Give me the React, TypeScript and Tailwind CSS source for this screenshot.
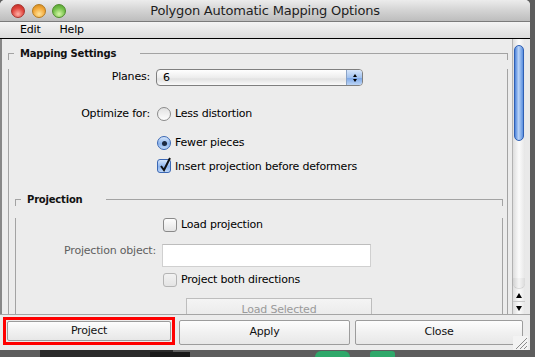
import clsx from 'clsx';

function Light({ color }: { color: 'red' | 'orange' | 'green' }) {
  return (
    <span
      className={clsx(
        'h-[14px] w-[14px] shrink-0 rounded-full border',
        color === 'red' &&
          'border-[#a8322d] bg-[radial-gradient(circle_at_50%_75%,#ffb0a6,#e0453d_55%,#b82a24)]',
        color === 'orange' &&
          'border-[#b47a1e] bg-[radial-gradient(circle_at_50%_75%,#ffe39a,#f3a93a_55%,#c98318)]',
        color === 'green' &&
          'border-[#4e8c2c] bg-[radial-gradient(circle_at_50%_75%,#d6f7a6,#76c24c_55%,#4f9a2c)]'
      )}
    />
  );
}

function Radio({ checked }: { checked?: boolean }) {
  return (
    <span
      className={clsx(
        'flex h-[14px] w-[14px] shrink-0 items-center justify-center rounded-full border',
        checked
          ? 'border-[#3a67b4] bg-[linear-gradient(#d6e6fa,#8db5ee_55%,#bdd6f7)]'
          : 'border-[#8a8a8a] bg-[linear-gradient(#e2e2e2,#fdfdfd)]'
      )}
    >
      {checked && <span className="h-[5px] w-[5px] rounded-full bg-[#1c2a42]" />}
    </span>
  );
}

function Check({ checked, disabled }: { checked?: boolean; disabled?: boolean }) {
  return (
    <span
      className={clsx(
        'relative h-[14px] w-[14px] shrink-0 rounded-[3px] border',
        checked
          ? 'border-[#3a67b4] bg-[linear-gradient(#d6e6fa,#8db5ee_55%,#bdd6f7)]'
          : disabled
            ? 'border-[#b4b4b4] bg-[linear-gradient(#f2f2f2,#e4e4e4)]'
            : 'border-[#8a8a8a] bg-[linear-gradient(#fdfdfd,#e4e4e4)]'
      )}
    >
      {checked && (
        <svg
          className="absolute -top-[3px] left-[1px]"
          width="14"
          height="16"
          viewBox="0 0 14 16"
        >
          <path d="M2 9 L5 13 L11 1" fill="none" stroke="#111" strokeWidth="2" />
        </svg>
      )}
    </span>
  );
}

function GroupHeader({ title }: { title: string }) {
  return (
    <div className="flex h-[14px] items-center">
      <div className="h-[7px] w-[6px] self-end border-l border-t border-[#a3a3a3]" />
      <span className="pl-[6px] pr-[24px] text-[10px] font-bold tracking-[-0.2px] text-[#111]">
        {title}
      </span>
      <div className="h-[7px] flex-1 self-end border-r border-t border-[#a3a3a3]" />
    </div>
  );
}

function Scrollbar() {
  return (
    <div className="flex w-[13px] flex-col border-l border-[#b2b2b2] bg-[linear-gradient(90deg,#dedede,#fbfbfb_50%,#e6e6e6)]">
      <div className="flex flex-1 flex-col">
        <div className="mx-[1px] mt-[6px] h-[96px] rounded-full border border-[#2f5fb3] bg-[linear-gradient(90deg,#4d84db,#b9d3f7_45%,#9fc0f0_60%,#5b90df)]" />
        <div className="flex-1" />
        <div className="mb-[2px] h-[10px] rounded-b-full bg-[linear-gradient(90deg,#d2d2d2,#f5f5f5_50%,#dadada)] shadow-[0_1px_1px_rgba(0,0,0,0.15)]" />
      </div>
      <div className="flex h-[12px] items-center justify-center border-b border-[#c9c9c9]">
        <span className="h-0 w-0 border-x-[3px] border-b-[5px] border-x-transparent border-b-black" />
      </div>
      <div className="flex h-[12px] items-center justify-center">
        <span className="h-0 w-0 border-x-[3px] border-t-[5px] border-x-transparent border-t-black" />
      </div>
    </div>
  );
}

function Button({ label, className }: { label: string; className?: string }) {
  return (
    <div
      className={clsx(
        'flex items-center justify-center rounded-[2px] border border-[#9c9c9c] bg-[linear-gradient(#fdfdfd,#f1f1f1_50%,#e7e7e7)] text-[#111]',
        className
      )}
    >
      {label}
    </div>
  );
}

export default function App() {
  return (
    <div className="relative h-[357px] w-[535px] overflow-hidden bg-[#5d5d5d] font-['DejaVu_Sans',sans-serif] text-[11px] tracking-[-0.2px] text-black">
      <div className="flex h-[350px] w-[530px] flex-col overflow-hidden rounded-t-[5px] bg-[#ececec]">
        {/* title bar */}
        <div className="relative flex h-[22px] items-center border-b border-[#7b7b7b] bg-[linear-gradient(#ececec,#d3d3d3_50%,#bdbdbd)]">
          <div className="ml-[11px] flex gap-[6.5px]">
            <Light color="red" />
            <Light color="orange" />
            <Light color="green" />
          </div>
          <div className="absolute inset-0 flex items-center justify-center text-[13px] text-[#1e1e1e]">
            Polygon Automatic Mapping Options
          </div>
        </div>

        {/* menu bar */}
        <div className="flex h-[17px] items-center gap-[19px] border-b border-black bg-[linear-gradient(#f4f4f4,#dcdcdc)] pl-[20px]">
          <span>Edit</span>
          <span>Help</span>
        </div>

        {/* scroll area */}
        <div className="flex h-[276px] border-b border-[#a5a5a5]">
          <div className="w-[512px] overflow-hidden border-l-2 border-[#878787] pt-[7px]">
            <div className="ml-[6px] w-[500px]">
              <GroupHeader title="Mapping Settings" />
              <div className="border-x border-[#a3a3a3] pb-[40px]">
                <div className="mt-[9px] flex h-[17px] items-center">
                  <span className="w-[141px] text-right">Planes:</span>
                  <div className="ml-[6px] flex h-[17px] w-[207px] overflow-hidden rounded-[4px] border border-[#7f7f7f] bg-[linear-gradient(#ffffff,#ededed_50%,#e2e2e2_60%,#fafafa)]">
                    <span className="flex-1 pl-[6px] leading-[15px]">6</span>
                    <span className="flex w-[16px] flex-col items-center justify-center gap-[2px] border-l border-[#8aa3c6] bg-[linear-gradient(#d7e6fa,#a3c3ef_50%,#7ea9e8_55%,#bcd5f6)]">
                      <span className="h-0 w-0 border-x-[2.5px] border-b-[3px] border-x-transparent border-b-black" />
                      <span className="h-0 w-0 border-x-[2.5px] border-t-[3px] border-x-transparent border-t-black" />
                    </span>
                  </div>
                </div>

                <div className="mt-[21px] flex h-[14px] items-center">
                  <span className="w-[141px] text-right">Optimize for:</span>
                  <span className="ml-[7px]">
                    <Radio />
                  </span>
                  <span className="ml-[4px]">Less distortion</span>
                </div>
                <div className="mt-[15px] flex h-[14px] items-center pl-[148px]">
                  <Radio checked />
                  <span className="ml-[4px]">Fewer pieces</span>
                </div>
                <div className="mt-[9px] flex h-[14px] items-center pl-[148px]">
                  <Check checked />
                  <span className="ml-[4px] pt-[2px]">Insert projection before deformers</span>
                </div>

                <div className="ml-[6px] mt-[19px] w-[488px]">
                  <GroupHeader title="Projection" />
                  <div className="border-x border-[#a3a3a3] pb-[30px]">
                    <div className="mt-[12px] flex h-[14px] items-center pl-[147px]">
                      <Check />
                      <span className="ml-[4px]">Load projection</span>
                    </div>
                    <div className="mt-[12px] flex items-start">
                      <span className="w-[140px] text-right leading-[14px] text-[#5f5f5f]">
                        Projection object:
                      </span>
                      <div className="ml-[6px] h-[23px] w-[209px] border border-[#d0d0d0] border-t-[#bdbdbd] bg-white" />
                    </div>
                    <div className="mt-[6px] flex h-[14px] items-center pl-[147px]">
                      <Check disabled />
                      <span className="ml-[4px]">Project both directions</span>
                    </div>
                    <div className="ml-[170px] mt-[11px] flex h-[22px] w-[186px] items-start justify-center border border-[#bdbdbd] bg-[linear-gradient(#f4f4f4,#e9e9e9)] pt-[3px] text-[#9a9a9a]">
                      Load Selected
                    </div>
                  </div>
                </div>
              </div>
            </div>
          </div>
          <Scrollbar />
          <div className="w-[5px] bg-[#e9e9e9]" />
        </div>

        {/* buttons */}
        <div className="relative flex flex-1 items-start pl-[3px] pt-[2px]">
          <div className="flex h-[28px] w-[172px] border-[3px] border-[#ff0000] p-[1px]">
            <Button label="Project" className="flex-1" />
          </div>
          <Button label="Apply" className="ml-[4px] mt-[3px] h-[25px] w-[171px]" />
          <Button label="Close" className="ml-[5px] mt-[3px] h-[25px] w-[168px]" />
          <svg
            className="absolute bottom-0 right-[2px]"
            width="15"
            height="14"
            viewBox="0 0 15 14"
          >
            <rect x="0" y="0" width="15" height="14" fill="#f3f3f3" />
            <path d="M3 13 L14 2 M7 13 L14 6 M11 13 L14 10" stroke="#8a8a8a" strokeWidth="1" />
          </svg>
        </div>
      </div>

      {/* viewport behind the window */}
      <div className="absolute bottom-0 left-[40px] h-[7px] w-[133px] bg-[#2a2a2a]" />
      <div className="absolute bottom-0 left-[150px] h-[5px] w-[40px] bg-[#1a1a1a]" />
      <div className="absolute bottom-0 left-[315px] h-[6px] w-[35px] rounded-t-full bg-[#2fa86a]" />
      <div className="absolute bottom-0 left-[370px] h-[6px] w-[25px] rounded-t-[3px] bg-[#2fa86a]" />
    </div>
  );
}
